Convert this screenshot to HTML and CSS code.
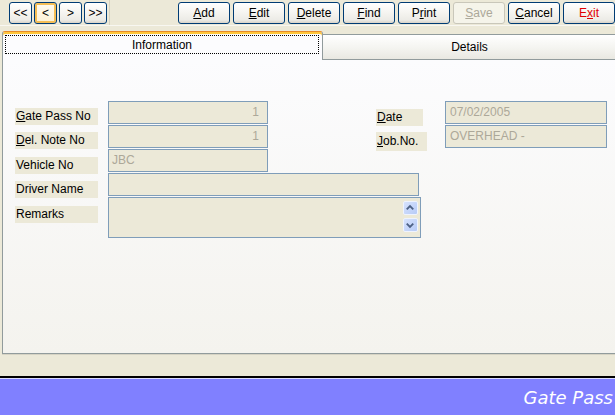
FILE: index.html
```html
<!DOCTYPE html>
<html>
<head>
<meta charset="utf-8">
<title>Gate Pass</title>
<link rel="stylesheet" href="styles.css">
</head>
<body>
<div class="window">
  <div class="toolbar">
    <div class="nav">
      <div class="btn nbtn">&lt;&lt;</div>
      <div class="btn nbtn focus">&lt;</div>
      <div class="btn nbtn">&gt;</div>
      <div class="btn nbtn">&gt;&gt;</div>
    </div>
    <div class="actions">
      <div class="btn abtn"><u>A</u>dd</div>
      <div class="btn abtn"><u>E</u>dit</div>
      <div class="btn abtn"><u>D</u>elete</div>
      <div class="btn abtn"><u>F</u>ind</div>
      <div class="btn abtn">P<u>r</u>int</div>
      <div class="btn abtn disabled"><u>S</u>ave</div>
      <div class="btn abtn"><u>C</u>ancel</div>
      <div class="btn abtn exit">E<u>x</u>it</div>
    </div>
  </div>

  <div class="tabarea">
    <div class="tabstrip">
      <div class="tab active"><div class="focusrect">Information</div></div>
      <div class="tab details">Details</div>
    </div>
    <div class="panel">
      <div class="form">
        <div class="row">
          <div class="lbl"><u>G</u>ate Pass No</div>
          <div class="inp num">1</div>
          <div class="rgroup">
            <div class="rlbl"><u>D</u>ate</div>
            <div class="inp rinp">07/02/2005</div>
          </div>
        </div>
        <div class="row">
          <div class="lbl"><u>D</u>el. Note No</div>
          <div class="inp num">1</div>
          <div class="rgroup">
            <div class="rlbl job"><u>J</u>ob.No.</div>
            <div class="inp rinp">OVERHEAD -</div>
          </div>
        </div>
        <div class="row">
          <div class="lbl l8">Vehicle No</div>
          <div class="inp">JBC</div>
        </div>
        <div class="row">
          <div class="lbl l8">Driver Name</div>
          <div class="inp driver"></div>
        </div>
        <div class="row tall">
          <div class="lbl l9">Remarks</div>
          <div class="inp remarks">
            <div class="scroll">
              <div class="sbtn"><svg width="15" height="14" viewBox="0 0 15 14"><path d="M4 8.5 L7.5 5 L11 8.5" fill="none" stroke="#4D6185" stroke-width="2"/></svg></div>
              <div class="sbtn"><svg width="15" height="14" viewBox="0 0 15 14"><path d="M4 5.5 L7.5 9 L11 5.5" fill="none" stroke="#4D6185" stroke-width="2"/></svg></div>
            </div>
          </div>
        </div>
      </div>
    </div>
  </div>

  <div class="footer"><span class="title">Gate Pass</span></div>
</div>
</body>
</html>
```

FILE: styles.css
```css
html, body {
  margin: 0;
  padding: 0;
}
body {
  background: #ECE9D8;
  font-family: "Liberation Sans", Arial, sans-serif;
  font-size: 12px;
  color: #000;
  width: 615px;
  height: 415px;
  overflow: hidden;
}
.window {
  display: flex;
  flex-direction: column;
  height: 415px;
  width: 615px;
}

/* toolbar */
.toolbar {
  display: flex;
  height: 25px;
  border-bottom: 1px solid #F8F7F1;
  flex-shrink: 0;
}
.nav {
  box-sizing: border-box;
  width: 111px;
  height: 25px;
  display: flex;
  gap: 2px;
  padding: 2px 0 0 9px;
  border-right: 1px solid #D6D2C0;
}
.btn {
  box-sizing: border-box;
  height: 22px;
  border: 1px solid #003C74;
  border-radius: 3px;
  background: linear-gradient(#FFFFFF 0%, #F6F5F1 45%, #ECEBE6 85%, #D9D4C9 100%);
  display: flex;
  align-items: center;
  justify-content: center;
  color: #000;
  line-height: 1;
}
.nbtn {
  width: 23px;
}
.nbtn.focus {
  background: linear-gradient(#FFFBF0, #FBF0D4);
  box-shadow: inset 0 0 0 2px #F5BE55;
}
.actions {
  display: flex;
  gap: 3px;
  margin-left: 68px;
  padding-top: 2px;
}
.abtn {
  width: 52px;
}
.abtn.disabled {
  border-color: #C9C7BA;
  color: #ACA899;
  background: #F5F4EA;
}
.abtn.exit {
  color: #E00000;
}

/* tabs */
.tabarea {
  margin: 5px 0 0 2px;
  width: 630px;
  display: flex;
  flex-direction: column;
  flex-shrink: 0;
}
.tabstrip {
  display: flex;
  align-items: flex-end;
  height: 29px;
}
.tab {
  box-sizing: border-box;
}
.tab.active {
  width: 321px;
  height: 29px;
  border: 1px solid #919B9C;
  border-top: 1px solid #E68B2C;
  border-bottom: none;
  border-radius: 3px 3px 0 0;
  box-shadow: inset 0 2px 0 #FFC73C;
  background: #FCFCFE;
  padding: 3px 3px 0 2px;
}
.focusrect {
  box-sizing: border-box;
  height: 19px;
  border: 1px dotted #000;
  display: flex;
  align-items: center;
  justify-content: center;
}
.tab.details {
  flex: 1;
  height: 26px;
  border: 1px solid #919B9C;
  border-left: none;
  background: linear-gradient(#FFFFFF, #F4F4F0 55%, #E9E8E1);
  display: flex;
  align-items: center;
  justify-content: center;
  padding-right: 15px;
}
.panel {
  box-sizing: border-box;
  height: 294px;
  border-left: 1px solid #919B9C;
  border-bottom: 1px solid #919B9C;
  box-shadow: 0 1px 0 #D6D3C4;
  background: linear-gradient(#FCFCFE, #F4F3EE);
  padding: 41px 0 0 12px;
}

/* form */
.form {
  display: flex;
  flex-direction: column;
}
.row {
  display: flex;
  align-items: flex-start;
  height: 24px;
}
.row.tall {
  height: auto;
}
.lbl {
  box-sizing: border-box;
  width: 83px;
  height: 17px;
  line-height: 17px;
  margin: 7px 10px 0 0;
  padding-left: 1px;
  background: #ECE9D8;
  white-space: nowrap;
}
.lbl.l8 {
  margin-top: 8px;
}
.lbl.l9 {
  margin-top: 9px;
}
.inp {
  box-sizing: border-box;
  width: 160px;
  height: 23px;
  border: 1px solid #7F9DB9;
  background: #ECE9D8;
  color: #ACA899;
  line-height: 21px;
  padding: 0 3px;
  white-space: nowrap;
}
.inp.num {
  text-align: right;
  padding-right: 8px;
}
.inp.driver {
  width: 311px;
}
.inp.remarks {
  width: 313px;
  height: 41px;
  display: flex;
  justify-content: flex-end;
  padding: 3px 2px 0 0;
}
.scroll {
  display: flex;
  flex-direction: column;
  gap: 3px;
}
.sbtn {
  box-sizing: border-box;
  width: 15px;
  height: 14px;
  border: 1px solid #EEF3FF;
  border-radius: 2px;
  background: linear-gradient(135deg, #D6E2FD, #B7CBF7);
  display: flex;
}
.sbtn svg {
  margin: -1px 0 0 -1px;
}
.rgroup {
  display: flex;
  width: 231px;
  margin-left: 108px;
}
.rlbl {
  box-sizing: border-box;
  width: 47px;
  height: 17px;
  line-height: 17px;
  margin-top: 8px;
  padding-left: 1px;
  background: #ECE9D8;
}
.rlbl.job {
  width: 51px;
  height: 19px;
  line-height: 19px;
  margin-top: 7px;
}
.inp.rinp {
  width: 162px;
  margin-left: auto;
  padding-left: 4px;
}

/* footer */
.footer {
  box-sizing: border-box;
  margin-top: auto;
  height: 39px;
  border-top: 2px solid #000;
  box-shadow: inset 0 1px 0 #DCDCFF;
  background: #8080FF;
  display: flex;
  align-items: center;
  justify-content: flex-end;
  flex-shrink: 0;
}
.title {
  font-family: "DejaVu Sans", Verdana, sans-serif;
  font-style: italic;
  font-size: 18px;
  color: #FFFFFF;
  margin-right: 2px;
  margin-top: 2px;
  white-space: nowrap;
}
```
